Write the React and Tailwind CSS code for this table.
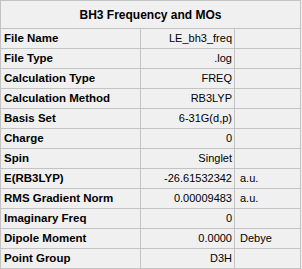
const ROWS = [
  { label: 'File Name', value: 'LE_bh3_freq', unit: '' },
  { label: 'File Type', value: '.log', unit: '' },
  { label: 'Calculation Type', value: 'FREQ', unit: '' },
  { label: 'Calculation Method', value: 'RB3LYP', unit: '' },
  { label: 'Basis Set', value: '6-31G(d,p)', unit: '' },
  { label: 'Charge', value: '0', unit: '' },
  { label: 'Spin', value: 'Singlet', unit: '' },
  { label: 'E(RB3LYP)', value: '-26.61532342', unit: 'a.u.' },
  { label: 'RMS Gradient Norm', value: '0.00009483', unit: 'a.u.' },
  { label: 'Imaginary Freq', value: '0', unit: '' },
  { label: 'Dipole Moment', value: '0.0000', unit: 'Debye' },
  { label: 'Point Group', value: 'D3H', unit: '' },
]

export default function App() {
  return (
    <div className="w-[302px] h-[269px] bg-[#f0f0f0] text-black" style={{ fontFamily: '"Liberation Sans", Arial, sans-serif' }}>
      <div className="w-[301px] border-l border-t border-[#c3c3c3]">
        {/* Title */}
        <div className="h-[28px] flex items-center justify-center border-r border-b border-[#c3c3c3] text-[12px] font-bold">
          BH3 Frequency and MOs
        </div>

        {/* Property rows */}
        {ROWS.map(r => (
          <div key={r.label} className="grid grid-cols-[140px_94px_66px] h-[20px]">
            <div className="flex items-center pl-[3px] border-r border-b border-[#c3c3c3] text-[11.5px] font-bold whitespace-nowrap">
              {r.label}
            </div>
            <div className="flex items-center justify-end pr-[2px] border-r border-b border-[#c3c3c3] text-[11px] whitespace-nowrap">
              {r.value}
            </div>
            <div className="flex items-center pl-[5px] border-r border-b border-[#c3c3c3] text-[11px] whitespace-nowrap">
              {r.unit}
            </div>
          </div>
        ))}
      </div>
    </div>
  )
}
